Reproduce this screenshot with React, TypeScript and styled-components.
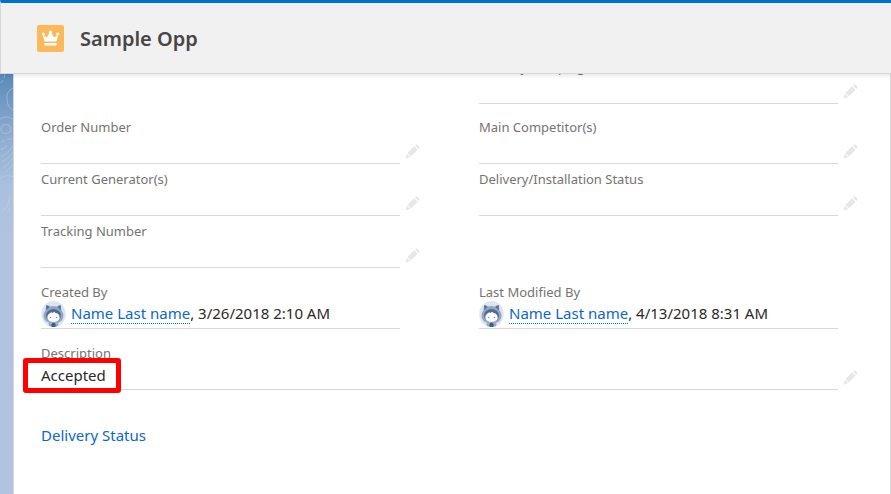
import React from "react";
import styled, { createGlobalStyle } from "styled-components";

const GlobalStyle = createGlobalStyle`
  * {
    box-sizing: border-box;
  }
  body {
    margin: 0;
    background: #b0c4df;
    color: #2b2826;
    font-family: "Noto Sans", "Open Sans", sans-serif;
    font-size: 15px;
    overflow: hidden;
  }
`;

const Page = styled.div`
  display: flex;
  flex-direction: column;
  min-height: 100vh;
`;

const Header = styled.header`
  position: sticky;
  top: 0;
  z-index: 2;
  display: flex;
  align-items: center;
  gap: 16px;
  height: 74px;
  padding-left: 36px;
  background: #f1f1f1;
  border-top: 3px solid #0070d2;
  border-bottom: 1px solid #d8d8d8;
  border-left: 1px solid #d8d8d8;
  box-shadow: 0 2px 4px rgba(0, 0, 0, 0.1);
`;

const RecordIcon = styled.svg`
  width: 27px;
  height: 27px;
`;

const Title = styled.h1`
  margin: 0;
  padding-top: 2px;
  color: #484644;
  font-size: 20px;
  font-weight: 600;
  line-height: 28px;
`;

const Body = styled.div`
  display: grid;
  grid-template-columns: 13px 1fr;
  flex: 1;
`;

const Backdrop = styled.svg`
  width: 13px;
  height: 160px;
`;

const Panel = styled.main`
  margin-top: -22px;
  padding-bottom: 40px;
  background: #fff;
  border-left: 1px solid #d4d8de;
  border-right: 1px solid #d8d8d8;
`;

const Section = styled.div<{ $tight?: boolean }>`
  display: grid;
  grid-template-columns: 1fr 1fr;
  margin-bottom: ${({ $tight }) => ($tight ? 8 : 9)}px;
`;

const Cell = styled.div<{ $wide?: boolean }>`
  display: flex;
  align-items: flex-end;
  gap: 5px;
  height: 52px;
  padding: 0 32px 0 27px;
  grid-column: ${({ $wide }) => ($wide ? "1 / -1" : "auto")};
`;

const Content = styled.div`
  flex: 1;
  height: 52px;
  padding-top: 6px;
  border-bottom: 1px solid #d8d8d8;
`;

const Label = styled.div`
  color: #757370;
  font-size: 13px;
  line-height: 18px;
`;

const Value = styled.div`
  display: flex;
  align-items: center;
  height: 26px;
`;

const EditSlot = styled.div`
  display: flex;
  width: 15px;
  padding-bottom: 5px;
`;

const EditButton = styled.button`
  display: flex;
  padding: 0;
  border: 0;
  background: none;
  cursor: pointer;
`;

const AvatarImage = styled.svg`
  width: 25px;
  height: 26px;
  margin-right: 5px;
`;

const Stamp = styled.span`
  line-height: 20px;
  padding-bottom: 2px;
`;

const UserLink = styled.a`
  color: #0b67c8;
  text-decoration: none;
  border-bottom: 1px dotted #0b67c8;
`;

const Highlighted = styled.span`
  position: relative;
  line-height: 20px;

  &::after {
    content: "";
    position: absolute;
    inset: -7px -15px -8px -18px;
    border: 5px solid #fe0000;
    border-radius: 3px;
    pointer-events: none;
  }
`;

const LinkRow = styled.div`
  padding: 26px 27px 0;
`;

const SectionLink = styled.a`
  color: #0b67c8;
  line-height: 20px;
  text-decoration: none;
`;

function Crown() {
  return (
    <RecordIcon viewBox="0 0 27 27" aria-hidden="true">
      <rect width="27" height="27" rx="2" fill="#fcb95b" />
      <g fill="#fff">
        <circle cx="6.3" cy="9" r="1.5" />
        <circle cx="13.5" cy="7" r="1.6" />
        <circle cx="20.7" cy="9" r="1.5" />
        <path d="M5.8 9.3 9 12Q9.8 12.6 10.3 11.8L12.6 7.5H14.4L16.7 11.8Q17.2 12.6 18 12L21.2 9.3 19.8 15.8Q19.6 16.6 19 16.6H8Q7.4 16.6 7.2 15.8Z" />
        <rect x="7.2" y="17.9" width="12.6" height="2.5" rx="1.1" />
      </g>
    </RecordIcon>
  );
}

function Pencil() {
  return (
    <svg width="15" height="15" viewBox="0 0 15 15" fill="#e8e7e6" aria-hidden="true">
      <path d="M9.1 2.3 12.6 5.8 5.9 12.5 2.4 9Z" />
      <path d="M10 1.5 10.8.7Q11.6 0 12.4.7L14.3 2.6Q15 3.4 14.3 4.2L13.5 5Z" />
      <path d="M1.8 9.8 5.2 13.1 1.1 14.4Q.4 14.5.6 13.8Z" />
    </svg>
  );
}

function Avatar() {
  return (
    <AvatarImage viewBox="0 0 25 26" aria-hidden="true">
      <ellipse cx="12.5" cy="13" rx="12.3" ry="13" fill="#dfe5ec" />
      <path d="M5.2 4.2Q6.8 3.2 9 5.5Q12.5 4.5 16 5.5Q18.3 3.2 19.8 4.2L20.5 9.5Q23 12 22.3 16.5Q21 22 12.5 22.5Q4 22 2.7 16.5Q2 12 4.5 9.5Z" fill="#91a6c7" />
      <path d="M5.2 4.2 8.6 5.7 5.4 9.2ZM19.8 4.2 16.4 5.7 19.6 9.2Z" fill="#566f98" />
      <ellipse cx="12.5" cy="14.4" rx="7.5" ry="6.3" fill="#516b94" />
      <path d="M6.3 17Q6.1 13.7 8.4 12.6L10.3 11.3 11.6 12.1 13.1 10.8 14.5 12 16.6 12.5Q18.9 14 18.7 17Q17.4 21 12.5 21Q7.6 21 6.3 17Z" fill="#fff" />
      <circle cx="9.5" cy="16.5" r="0.8" fill="#7e91ae" />
      <circle cx="15.5" cy="16.5" r="0.8" fill="#7e91ae" />
      <path d="M7.5 22Q12.5 23.5 17.5 22L17 25Q12.5 27 8 25Z" fill="#91a6c7" />
      <circle cx="12.5" cy="24" r="2.2" fill="#3f5b88" />
    </AvatarImage>
  );
}

type FieldProps = {
  label: string;
  editable?: boolean;
  wide?: boolean;
  children?: React.ReactNode;
};

function Field({ label, editable = true, wide, children }: FieldProps) {
  return (
    <Cell $wide={wide}>
      <Content>
        <Label>{label}</Label>
        <Value>{children}</Value>
      </Content>
      <EditSlot>
        {editable && (
          <EditButton type="button" aria-label={`Edit ${label}`}>
            <Pencil />
          </EditButton>
        )}
      </EditSlot>
    </Cell>
  );
}

function UserStamp({ date }: { date: string }) {
  return (
    <>
      <Avatar />
      <Stamp>
        <UserLink href="#user">Name Last name</UserLink>, {date}
      </Stamp>
    </>
  );
}

export default function App() {
  return (
    <>
      <GlobalStyle />
      <Page>
        <Header>
          <Crown />
          <Title>Sample Opp</Title>
        </Header>
        <Body>
          <Backdrop viewBox="0 0 13 160" aria-hidden="true">
            <defs>
              <linearGradient id="sky" x1="0" y1="0" x2="0" y2="1">
                <stop offset="0" stopColor="#5b8bba" />
                <stop offset="0.38" stopColor="#8dabd1" />
                <stop offset="0.7" stopColor="#a9c0de" />
                <stop offset="1" stopColor="#b0c4df" />
              </linearGradient>
            </defs>
            <rect width="13" height="160" fill="url(#sky)" />
            <g fill="none" stroke="#c6d6e9" strokeOpacity="0.45" strokeWidth="1">
              <path d="M1 9 3 6M4 4 5 0" />
              <path d="M13 14Q6 17 7 26Q8 34 13 36" />
              <path d="M0 45Q6 41 13 45" />
              <ellipse cx="6" cy="55" rx="5" ry="4.5" />
              <path d="M1 68 5 66M7 65 12 65" />
              <path d="M1 76Q5 74 7 71M1 83Q8 80 13 72M2 88Q8 85 13 78M3 94Q8 91 13 84M5 98Q10 95 13 90" />
              <path d="M0 104Q7 100 13 103" />
              <path d="M2 136Q7 136 8 129Q9 123 13 121M7 138 10 134" />
            </g>
          </Backdrop>
          <Panel>
            <Section $tight>
              <Cell />
              <Field label="Primary Campaign Source" />
            </Section>
            <Section>
              <Field label="Order Number" />
              <Field label="Main Competitor(s)" />
              <Field label="Current Generator(s)" />
              <Field label="Delivery/Installation Status" />
              <Field label="Tracking Number" />
            </Section>
            <Section>
              <Field label="Created By" editable={false}>
                <UserStamp date="3/26/2018 2:10 AM" />
              </Field>
              <Field label="Last Modified By" editable={false}>
                <UserStamp date="4/13/2018 8:31 AM" />
              </Field>
            </Section>
            <Section>
              <Field label="Description" wide>
                <Highlighted>Accepted</Highlighted>
              </Field>
            </Section>
            <LinkRow>
              <SectionLink href="#delivery-status">Delivery Status</SectionLink>
            </LinkRow>
          </Panel>
        </Body>
      </Page>
    </>
  );
}
